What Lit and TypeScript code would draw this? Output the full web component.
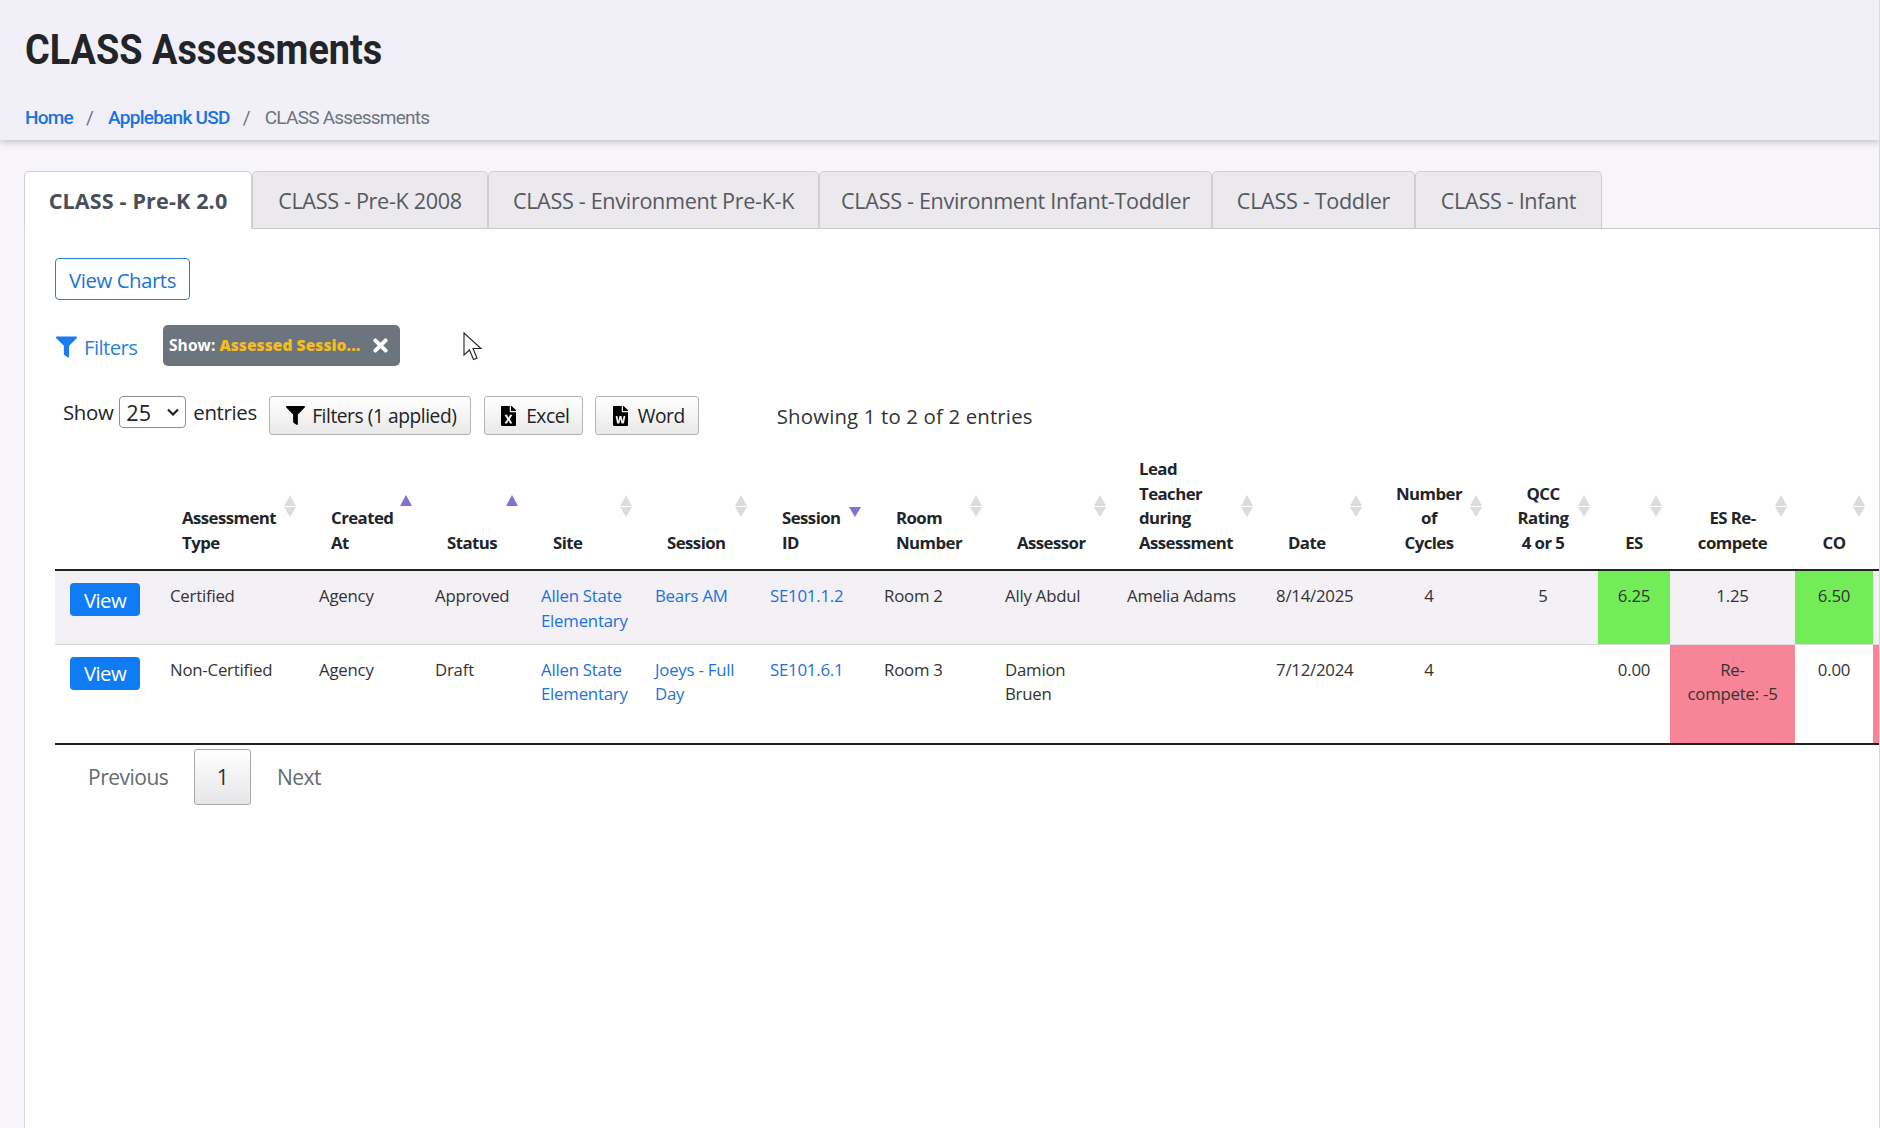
import { LitElement, html, css, svg } from "lit";
import { customElement } from "lit/decorators.js";

const FILTER = svg`<path d="M487.976 0H24.028C2.71 0-8.047 25.866 7.058 40.971L192 225.941V432c0 7.831 3.821 15.17 10.237 19.662l80 55.98C298.02 518.69 320 507.493 320 487.98V225.941l184.947-184.97C520.021 25.896 509.338 0 487.976 0z"/>`;
const EXCEL = svg`<path d="M224 136V0H24C10.7 0 0 10.7 0 24v464c0 13.3 10.7 24 24 24h336c13.3 0 24-10.7 24-24V160H248c-13.2 0-24-10.8-24-24zm60.1 106.5L224 336l60.1 93.5c5.1 8-.6 18.5-10.1 18.5h-34.9c-4.4 0-8.5-2.4-10.6-6.3C208.9 405.5 192 373 192 373c-6.4 14.8-10 20-36.6 68.8-2.1 3.9-6.1 6.3-10.5 6.3H110c-9.5 0-15.2-10.5-10.1-18.5l60.3-93.5-60.3-93.5c-5.2-8 .6-18.5 10.1-18.5h34.8c4.4 0 8.5 2.4 10.6 6.3 26.1 48.8 20 33.6 36.6 68.5 0 0 6.1-11.7 36.6-68.5 2.1-3.9 6.2-6.3 10.6-6.3H274c9.5-.1 15.2 10.4 10.1 18.4zM384 121.9v6.1H256V0h6.1c6.4 0 12.5 2.5 17 7l97.9 98c4.5 4.5 7 10.6 7 16.9z"/>`;
const WORD = svg`<path d="M224 136V0H24C10.7 0 0 10.7 0 24v464c0 13.3 10.7 24 24 24h336c13.3 0 24-10.7 24-24V160H248c-13.2 0-24-10.8-24-24zm57.1 120H305c7.7 0 13.4 7.1 11.7 14.7l-38 168c-1.2 5.5-6.1 9.3-11.7 9.3h-38c-5.5 0-10.3-3.8-11.6-9.1-25.8-103.5-20.8-81.2-25.6-110.5h-.5c-1.1 14.3-2.4 17.4-25.6 110.5-1.3 5.3-6.1 9.1-11.6 9.1H117c-5.6 0-10.5-3.9-11.7-9.4l-37.8-168c-1.7-7.5 4-14.6 11.7-14.6h24.5c5.7 0 10.7 4 11.8 9.7 15.6 78 20.1 109.5 21 122.2 1.6-10.2 7.3-32.7 29.4-122.7 1.3-5.4 6.1-9.1 11.7-9.1h29.1c5.6 0 10.4 3.8 11.7 9.2 24 100.4 28.8 124 29.6 129.4-.2-11.2-2.6-17.8 21.6-129.2 1-5.6 5.9-9.5 11.5-9.5zM384 121.9v6.1H256V0h6.1c6.4 0 12.5 2.5 17 7l97.9 98c4.5 4.5 7 10.6 7 16.9z"/>`;
const TIMES = svg`<path d="M242.72 256l100.07-100.07c12.28-12.28 12.28-32.19 0-44.48l-22.24-22.24c-12.28-12.28-32.19-12.28-44.48 0L176 189.28 75.93 89.21c-12.28-12.28-32.19-12.28-44.48 0L9.21 111.45c-12.28 12.28-12.28 32.19 0 44.48L109.28 256 9.21 356.07c-12.28 12.28-12.28 32.19 0 44.48l22.24 22.24c12.28 12.28 32.2 12.28 44.48 0L176 322.72l100.07 100.07c12.28 12.28 32.2 12.28 44.48 0l22.24-22.24c12.28-12.28 12.28-32.19 0-44.48L242.72 256z"/>`;

type Col = { label: string[]; w: number; center?: boolean; nudge?: boolean; sort?: "up" | "down" | "none" | "off" };
const COLS: Col[] = [
  { label: [], w: 100, sort: "off" },
  { label: ["Assessment", "Type"], w: 149 },
  { label: ["Created", "At"], w: 116, sort: "up" },
  { label: ["Status"], w: 106, sort: "up" },
  { label: ["Site"], w: 114 },
  { label: ["Session"], w: 115 },
  { label: ["Session", "ID"], w: 114, sort: "down" },
  { label: ["Room", "Number"], w: 121 },
  { label: ["Assessor"], w: 122, nudge: true },
  { label: ["Lead", "Teacher", "during", "Assessment"], w: 149 },
  { label: ["Date"], w: 109 },
  { label: ["Number", "of", "Cycles"], w: 118, center: true, nudge: true },
  { label: ["QCC", "Rating", "4 or 5"], w: 110, center: true },
  { label: ["ES"], w: 72, center: true },
  { label: ["ES Re-", "compete"], w: 125, center: true },
  { label: ["CO"], w: 78, center: true },
  { label: [], w: 80, sort: "off" },
];

@customElement("app-root")
export class AppRoot extends LitElement {
  static styles = css`
    :host {
      display: block;
      height: 1128px;
      overflow: hidden;
      background: #f7f5fa;
      font-family: "Open Sans", "Noto Sans", sans-serif;
      color: #212529;
      position: relative;
    }
    a { color: #1a73e0; text-decoration: none; }
    .header {
      height: 140px;
      box-sizing: border-box;
      background: #f1eff8;
      box-shadow: 0 2px 7px rgba(90, 85, 110, 0.35);
      padding: 23px 0 0 25px;
      font-family: Roboto, sans-serif;
      position: relative;
    }
    h1 {
      margin: 0;
      font-size: 43px;
      line-height: 52px;
      font-weight: 700;
      color: #212529;
      transform: scaleX(0.88);
      transform-origin: left center;
      white-space: nowrap;
    }
    .crumbs {
      margin-top: 31px;
      display: flex;
      font-size: 19px;
      line-height: 24px;
      font-weight: 500;
      letter-spacing: -0.75px;
      color: #6c757d;
    }
    .crumbs .sep { margin: 0 15px 0 13px; font-weight: 400; }
    .crumbs .cur { font-weight: 400; }
    .main { padding: 31px 0 0 24px; height: 957px; box-sizing: border-box; }
    .tabs {
      display: flex;
      height: 58px;
      box-sizing: border-box;
      border-bottom: 1px solid #c9c9cc;
    }
    .tab {
      box-sizing: border-box;
      height: 58px;
      display: flex;
      align-items: center;
      justify-content: center;
      font-size: 21.6px;
      letter-spacing: -0.32px;
      color: #55595f;
      background: #ebe9ed;
      border: 1px solid #cfcfd2;
      border-bottom-color: #c9c9cc;
      border-radius: 5px 5px 0 0;
    }
    .tab.on {
      background: #fff;
      font-weight: 700;
      letter-spacing: 0.12px;
      color: #495057;
      border-bottom-color: #fff;
    }
    .panel {
      background: #fff;
      border-left: 1px solid #d6d6da;
      height: 899px;
      padding: 29px 0 0 30px;
      overflow: hidden;
    }
    .charts {
      display: inline-flex;
      align-items: center;
      justify-content: center;
      width: 135px;
      height: 42px;
      box-sizing: border-box;
      padding-top: 1px;
      border: 1px solid #2a7fd8;
      border-radius: 4px;
      color: #1a73d8;
      font-size: 20.4px;
      letter-spacing: -0.45px;
    }
    .filterrow {
      display: flex;
      align-items: center;
      margin-top: 25px;
      height: 41px;
    }
    .flink {
      display: flex;
      align-items: center;
      width: 108px;
      padding-top: 2px;
      font-size: 20.4px;
      letter-spacing: -0.6px;
      color: #2a7fe0;
    }
    .flink svg { width: 21px; height: 22px; fill: #1a7cf2; margin: 0 7px 0 1px; }
    .chip {
      box-sizing: border-box;
      width: 237px;
      height: 41px;
      background: #6c757d;
      border-radius: 5px;
      display: flex;
      align-items: center;
      padding: 0 12px 2px 6px;
      font-size: 15.5px;
      font-weight: 700;
      letter-spacing: 0.08px;
      color: #fff;
      white-space: nowrap;
    }
    .chip b { color: #f5bd22; margin-left: 4px; flex: 1; }
    .chip svg { width: 15px; height: 21px; fill: #fff; margin-top: 2px; }
    .cursor { position: absolute; left: 463px; top: 332px; width: 20px; height: 29px; }
    .tools {
      display: flex;
      align-items: flex-start;
      margin-top: 30px;
      height: 39px;
      padding-left: 8px;
      font-size: 20.4px;
      letter-spacing: -0.35px;
    }
    .tools .lbl { line-height: 32px; }
    .select {
      box-sizing: border-box;
      width: 67px;
      height: 32px;
      margin: 0 7px 0 6px;
      border: 1px solid #8f8f96;
      border-radius: 4px;
      display: flex;
      align-items: center;
      justify-content: space-between;
      padding: 0 6px;
      font-size: 21.6px;
      letter-spacing: 0;
      background: #fff;
    }
    .select svg { width: 12px; height: 8px; fill: none; stroke: #222; stroke-width: 2.2; }
    .btn {
      box-sizing: border-box;
      height: 39px;
      display: flex;
      align-items: center;
      justify-content: center;
      border: 1px solid #b4b4b8;
      border-radius: 3px;
      background: linear-gradient(#fff, #e9e9ea);
      font-size: 19.2px;
      letter-spacing: -0.45px;
      color: #222;
    }
    .btn svg { fill: #000; margin-right: 7px; }
    .b1 { width: 202px; margin-left: 12px; padding-left: 3px; }
    .b1 svg { width: 19px; height: 19px; }
    .b2 { width: 99px; margin-left: 13px; padding-left: 4px; }
    .b3 { width: 104px; margin-left: 12px; padding-left: 4px; }
    .b2 svg, .b3 svg { width: 15px; height: 20px; margin-right: 10px; }
    .info {
      margin-left: 78px;
      line-height: 40px;
      letter-spacing: 0.15px;
      color: #333;
    }
    table {
      border-collapse: collapse;
      table-layout: fixed;
      width: 1861px;
      margin-top: 7px;
      font-size: 16.8px;
      letter-spacing: -0.22px;
      line-height: 24.6px;
    }
    th {
      position: relative;
      vertical-align: bottom;
      text-align: left;
      padding: 15px 18px 14px 27px;
      font-weight: 700;
      letter-spacing: -0.55px;
      color: #212529;
      white-space: nowrap;
      border-bottom: 2px solid #222;
    }
    th.c { text-align: center; padding-left: 8px; padding-right: 8px; }
    .arrows {
      position: absolute;
      right: 8px;
      top: 50%;
      margin-top: -12px;
      width: 12px;
      height: 24px;
    }
    th.n .arrows { right: 6px; }
    .arrows i {
      position: absolute;
      left: 0;
      width: 0;
      height: 0;
      border-left: 6px solid transparent;
      border-right: 6px solid transparent;
    }
    .arrows .u { top: 1px; border-bottom: 11px solid #dcdce0; }
    .arrows .d { top: 13px; border-top: 10px solid #dcdce0; }
    .arrows .u.on { border-bottom-color: #7c74d0; }
    .arrows .d.on { border-top-color: #7c74d0; }
    td {
      vertical-align: top;
      padding: 13px 15px 0;
      color: #333;
      box-sizing: border-box;
    }
    td.c { text-align: center; }
    tr.r1 td { height: 74px; background: #f3f0f6; border-bottom: 1px solid #dcdcdf; }
    tr.r2 td { height: 100px; background: #fff; border-bottom: 2px solid #222; }
    td.green { background: #72ec57 !important; }
    td.pink { background: #f78497 !important; }
    .view {
      display: flex;
      align-items: center;
      justify-content: center;
      width: 70px;
      height: 33px;
      margin-top: -1px;
      background: #0f7cf5;
      color: #fff;
      border-radius: 4px;
      font-size: 20.4px;
      letter-spacing: -0.6px;
    }
    .pager {
      display: flex;
      align-items: center;
      margin-top: 4px;
      height: 56px;
      font-size: 21px;
      letter-spacing: -0.5px;
      color: #666b70;
    }
    .pager .prev { margin-left: 33px; width: 106px; }
    .pager .cur {
      box-sizing: border-box;
      width: 57px;
      height: 56px;
      display: flex;
      align-items: center;
      justify-content: center;
      border: 1px solid #a9a9ad;
      border-radius: 3px;
      background: linear-gradient(#fff, #e6e6e8);
      color: #333;
      margin-right: 26px;
    }
    .edge {
      position: absolute;
      right: 0;
      top: 0;
      width: 1px;
      height: 1128px;
      background: #d8d8da;
    }
  `;

  private th(c: Col) {
    const s = c.sort ?? "none";
    return html`<th class="${c.center ? "c" : ""} ${c.nudge ? "n" : ""}">
      ${c.label.map((l, i) => html`${i ? html`<br />` : ""}${l}`)}
      ${s === "off"
        ? ""
        : html`<span class="arrows">
            ${s === "down" ? "" : html`<i class="u ${s === "up" ? "on" : ""}"></i>`}
            ${s === "up" ? "" : html`<i class="d ${s === "down" ? "on" : ""}"></i>`}
          </span>`}
    </th>`;
  }

  render() {
    return html`
      <div class="header">
        <h1>CLASS Assessments</h1>
        <div class="crumbs">
          <a href="#">Home</a><span class="sep">/</span>
          <a href="#">Applebank USD</a><span class="sep">/</span>
          <span class="cur">CLASS Assessments</span>
        </div>
      </div>
      <div class="main">
        <div class="tabs">
          <div class="tab on" style="width:228px">CLASS - Pre-K 2.0</div>
          <div class="tab" style="width:236px">CLASS - Pre-K 2008</div>
          <div class="tab" style="width:331px">CLASS - Environment Pre-K-K</div>
          <div class="tab" style="width:393px">CLASS - Environment Infant-Toddler</div>
          <div class="tab" style="width:203px">CLASS - Toddler</div>
          <div class="tab" style="width:187px">CLASS - Infant</div>
        </div>
        <div class="panel">
          <a class="charts" href="#">View Charts</a>
          <div class="filterrow">
            <div class="flink">
              <svg viewBox="0 0 512 512">${FILTER}</svg>Filters
            </div>
            <div class="chip">
              Show:<b>Assessed Sessio...</b>
              <svg viewBox="0 0 352 512">${TIMES}</svg>
            </div>
          </div>
          <div class="tools">
            <span class="lbl">Show</span>
            <div class="select">
              25
              <svg viewBox="0 0 12 8"><path d="M1 1.5l5 5 5-5" /></svg>
            </div>
            <span class="lbl">entries</span>
            <div class="btn b1"><svg viewBox="0 0 512 512">${FILTER}</svg>Filters (1 applied)</div>
            <div class="btn b2"><svg viewBox="0 0 384 512">${EXCEL}</svg>Excel</div>
            <div class="btn b3"><svg viewBox="0 0 384 512">${WORD}</svg>Word</div>
            <div class="info">Showing 1 to 2 of 2 entries</div>
          </div>
          <table>
            <colgroup>${COLS.map((c) => html`<col style="width:${c.w}px" />`)}</colgroup>
            <thead>
              <tr>${COLS.map((c) => this.th(c))}</tr>
            </thead>
            <tbody>
              <tr class="r1">
                <td><span class="view">View</span></td>
                <td>Certified</td>
                <td>Agency</td>
                <td>Approved</td>
                <td><a href="#">Allen State Elementary</a></td>
                <td><a href="#">Bears AM</a></td>
                <td><a href="#">SE101.1.2</a></td>
                <td>Room 2</td>
                <td>Ally Abdul</td>
                <td>Amelia Adams</td>
                <td>8/14/2025</td>
                <td class="c">4</td>
                <td class="c">5</td>
                <td class="c green">6.25</td>
                <td class="c">1.25</td>
                <td class="c green">6.50</td>
                <td></td>
              </tr>
              <tr class="r2">
                <td><span class="view">View</span></td>
                <td>Non-Certified</td>
                <td>Agency</td>
                <td>Draft</td>
                <td><a href="#">Allen State Elementary</a></td>
                <td><a href="#">Joeys - Full Day</a></td>
                <td><a href="#">SE101.6.1</a></td>
                <td>Room 3</td>
                <td>Damion Bruen</td>
                <td></td>
                <td>7/12/2024</td>
                <td class="c">4</td>
                <td></td>
                <td class="c">0.00</td>
                <td class="c pink">Re-<br />compete: -5</td>
                <td class="c">0.00</td>
                <td class="pink"></td>
              </tr>
            </tbody>
          </table>
          <div class="pager">
            <span class="prev">Previous</span>
            <span class="cur">1</span>
            <span>Next</span>
          </div>
        </div>
      </div>
      <svg class="cursor" viewBox="0 0 20 29">
        <path d="M1 1v22l5.5-5 4 9.5 3.5-1.5-4-9.5h8z" fill="#fff" stroke="#222" stroke-width="1.1" />
      </svg>
      <div class="edge"></div>
    `;
  }
}
